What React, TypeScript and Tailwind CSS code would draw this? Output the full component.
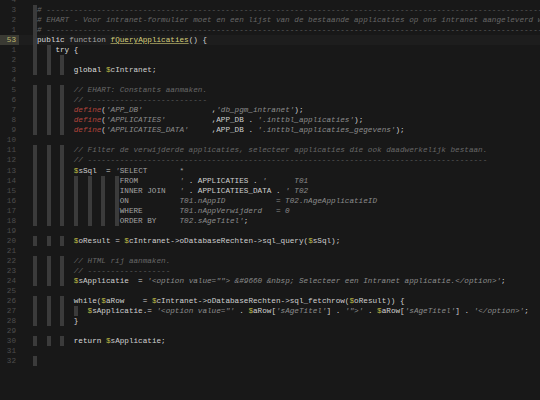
import React from 'react';

type Style = 'p' | 'k' | 'kd' | 'f' | 'v' | 'c' | 'r' | 's' | 'q';
type Seg = [string, Style];

interface Line {
  n: string;
  bars: string;
  segs: Seg[];
}

const sty: Record<Style, string> = {
  p: 'text-[#cfcfcf]',
  k: 'text-[#dcdcdc]',
  kd: 'text-[#a4a4a4]',
  f: 'text-[#d6cf7c] underline decoration-[#8c8752] underline-offset-1',
  v: 'text-[#bdb846]',
  c: 'text-[#676767] italic',
  r: 'text-[#b3453c] italic',
  s: 'text-[#8b8b8b] italic',
  q: 'text-[#a3a3a3]',
};

// indent guides, one class per column
const barLeft: Record<string, string> = {
  A: 'left-[33px]',
  B: 'left-[47px]',
  C: 'left-[60px]',
  D: 'left-[74px]',
  E: 'left-[88px]',
  F: 'left-[101px]',
  G: 'left-[115px]',
};

const sp = (n: number) => ' '.repeat(n);
const dash = (n: number) => '-'.repeat(n);
const I = sp(8);

const lines: Line[] = [
  { n: '4', bars: '', segs: [] },
  { n: '3', bars: 'A', segs: [['# ' + dash(120), 'c']] },
  {
    n: '2',
    bars: 'A',
    segs: [['# EHART - Voor intranet-formulier moet en een lijst van de bestaande applicaties op ons intranet aangeleverd worden.', 'c']],
  },
  { n: '1', bars: 'A', segs: [['# ' + dash(120), 'c']] },
  {
    n: '53',
    bars: 'A',
    segs: [['public', 'k'], [' ', 'p'], ['function', 'kd'], [' ', 'p'], ['fQueryApplicaties', 'f'], ['() {', 'p']],
  },
  { n: '1', bars: 'AB', segs: [[sp(4) + 'try {', 'k']] },
  { n: '2', bars: 'ABC', segs: [] },
  { n: '3', bars: 'ABC', segs: [[I + 'global ', 'k'], ['$', 'v'], ['cIntranet;', 'p']] },
  { n: '4', bars: '', segs: [] },
  { n: '5', bars: 'ABC', segs: [[I + '// EHART: Constants aanmaken.', 'c']] },
  { n: '6', bars: 'ABC', segs: [[I + '// ' + dash(26), 'c']] },
  {
    n: '7',
    bars: 'ABC',
    segs: [[I, 'p'], ['define', 'r'], ['(', 'p'], ["'APP_DB'", 's'], [sp(15) + ',', 'p'], ["'db_pgm_intranet'", 's'], [');', 'p']],
  },
  {
    n: '8',
    bars: 'ABC',
    segs: [[I, 'p'], ['define', 'r'], ['(', 'p'], ["'APPLICATIES'", 's'], [sp(10) + ',APP_DB . ', 'p'], ["'.inttbl_applicaties'", 's'], [');', 'p']],
  },
  {
    n: '9',
    bars: 'ABC',
    segs: [[I, 'p'], ['define', 'r'], ['(', 'p'], ["'APPLICATIES_DATA'", 's'], [sp(5) + ',APP_DB . ', 'p'], ["'.inttbl_applicaties_gegevens'", 's'], [');', 'p']],
  },
  { n: '10', bars: '', segs: [] },
  {
    n: '11',
    bars: 'ABC',
    segs: [[I + '// Filter de verwijderde applicaties, selecteer applicaties die ook daadwerkelijk bestaan.', 'c']],
  },
  { n: '12', bars: 'ABC', segs: [[I + '// ' + dash(87), 'c']] },
  {
    n: '13',
    bars: 'ABC',
    segs: [[I, 'p'], ['$', 'v'], ['sSql  = ', 'p'], ["'", 's'], ['SELECT' + sp(7) + '*', 'q']],
  },
  {
    n: '14',
    bars: 'ABCDEFG',
    segs: [[I + sp(10), 'p'], ['FROM' + sp(9), 'q'], ["'", 's'], [' . APPLICATIES . ', 'p'], ["'" + sp(6) + 'T01', 's']],
  },
  {
    n: '15',
    bars: 'ABCDEFG',
    segs: [[I + sp(10), 'p'], ['INNER JOIN' + sp(3), 'q'], ["'", 's'], [' . APPLICATIES_DATA . ', 'p'], ["' T02", 's']],
  },
  {
    n: '16',
    bars: 'ABCDEFG',
    segs: [[I + sp(10), 'p'], ['ON' + sp(11), 'q'], ['T01.nAppID' + sp(11) + '= T02.nAgeApplicatieID', 's']],
  },
  {
    n: '17',
    bars: 'ABCDEFG',
    segs: [[I + sp(10), 'p'], ['WHERE' + sp(8), 'q'], ['T01.nAppVerwijderd' + sp(3) + '= 0', 's']],
  },
  {
    n: '18',
    bars: 'ABCDEFG',
    segs: [[I + sp(10), 'p'], ['ORDER BY' + sp(5), 'q'], ["T02.sAgeTitel'", 's'], [';', 'p']],
  },
  { n: '19', bars: '', segs: [] },
  {
    n: '20',
    bars: 'ABC',
    segs: [[I, 'p'], ['$', 'v'], ['oResult = ', 'p'], ['$', 'v'], ['cIntranet->oDatabaseRechten->sql_query(', 'p'], ['$', 'v'], ['sSql);', 'p']],
  },
  { n: '21', bars: '', segs: [] },
  { n: '22', bars: 'ABC', segs: [[I + '// HTML rij aanmaken.', 'c']] },
  { n: '23', bars: 'ABC', segs: [[I + '// ' + dash(18), 'c']] },
  {
    n: '24',
    bars: 'ABC',
    segs: [[I, 'p'], ['$', 'v'], ['sApplicatie  = ', 'p'], ['\'<option value=""> &#9660 &nbsp; Selecteer een Intranet applicatie.</option>\'', 's'], [';', 'p']],
  },
  { n: '25', bars: '', segs: [] },
  {
    n: '26',
    bars: 'ABC',
    segs: [[I + 'while(', 'p'], ['$', 'v'], ['aRow    = ', 'p'], ['$', 'v'], ['cIntranet->oDatabaseRechten->sql_fetchrow(', 'p'], ['$', 'v'], ['oResult)) {', 'p']],
  },
  {
    n: '27',
    bars: 'ABCD',
    segs: [
      [sp(11), 'p'], ['$', 'v'], ['sApplicatie.= ', 'p'], ['\'<option value="\'', 's'], [' . ', 'p'], ['$', 'v'], ['aRow[', 'p'],
      ["'sAgeTitel'", 's'], ['] . ', 'p'], ['\'">\'', 's'], [' . ', 'p'], ['$', 'v'], ['aRow[', 'p'], ["'sAgeTitel'", 's'],
      ['] . ', 'p'], ["'</option>'", 's'], [';', 'p'],
    ],
  },
  { n: '28', bars: 'ABC', segs: [[I + '}', 'p']] },
  { n: '29', bars: '', segs: [] },
  { n: '30', bars: 'ABC', segs: [[I + 'return ', 'k'], ['$', 'v'], ['sApplicatie;', 'p']] },
  { n: '31', bars: '', segs: [] },
  { n: '32', bars: 'A', segs: [] },
];

const CodeLine: React.FC<{ line: Line; current: boolean }> = ({ line, current }) => (
  <div className={`relative flex h-[10.06px] leading-[10.06px] ${current ? 'bg-[#1d1d1d]' : ''}`}>
    {line.bars.split('').map((b) => (
      <span key={b} className={`absolute top-0 bottom-0 w-[4px] bg-[#3b3b3b] ${barLeft[b]}`} />
    ))}
    {/* Gutter */}
    <div className="w-[37px] shrink-0">
      <div
        className={`w-[19px] h-full text-right pr-[3px] ${
          current ? 'bg-[#3a3a33] text-[#bdb66c]' : 'text-[#4c4c4c]'
        }`}
      >
        {line.n}
      </div>
    </div>
    {/* Code */}
    <div className="relative whitespace-pre">
      {line.segs.map(([text, s], i) => (
        <span key={i} className={sty[s]}>
          {text}
        </span>
      ))}
    </div>
  </div>
);

export default function App() {
  return (
    <div className="w-[540px] h-[400px] bg-[#181818] overflow-hidden font-['Liberation_Mono',monospace] text-[7.67px]">
      <div className="-mt-[5.27px]">
        {lines.map((line, i) => (
          <CodeLine key={i} line={line} current={line.n === '53'} />
        ))}
      </div>
    </div>
  );
}
